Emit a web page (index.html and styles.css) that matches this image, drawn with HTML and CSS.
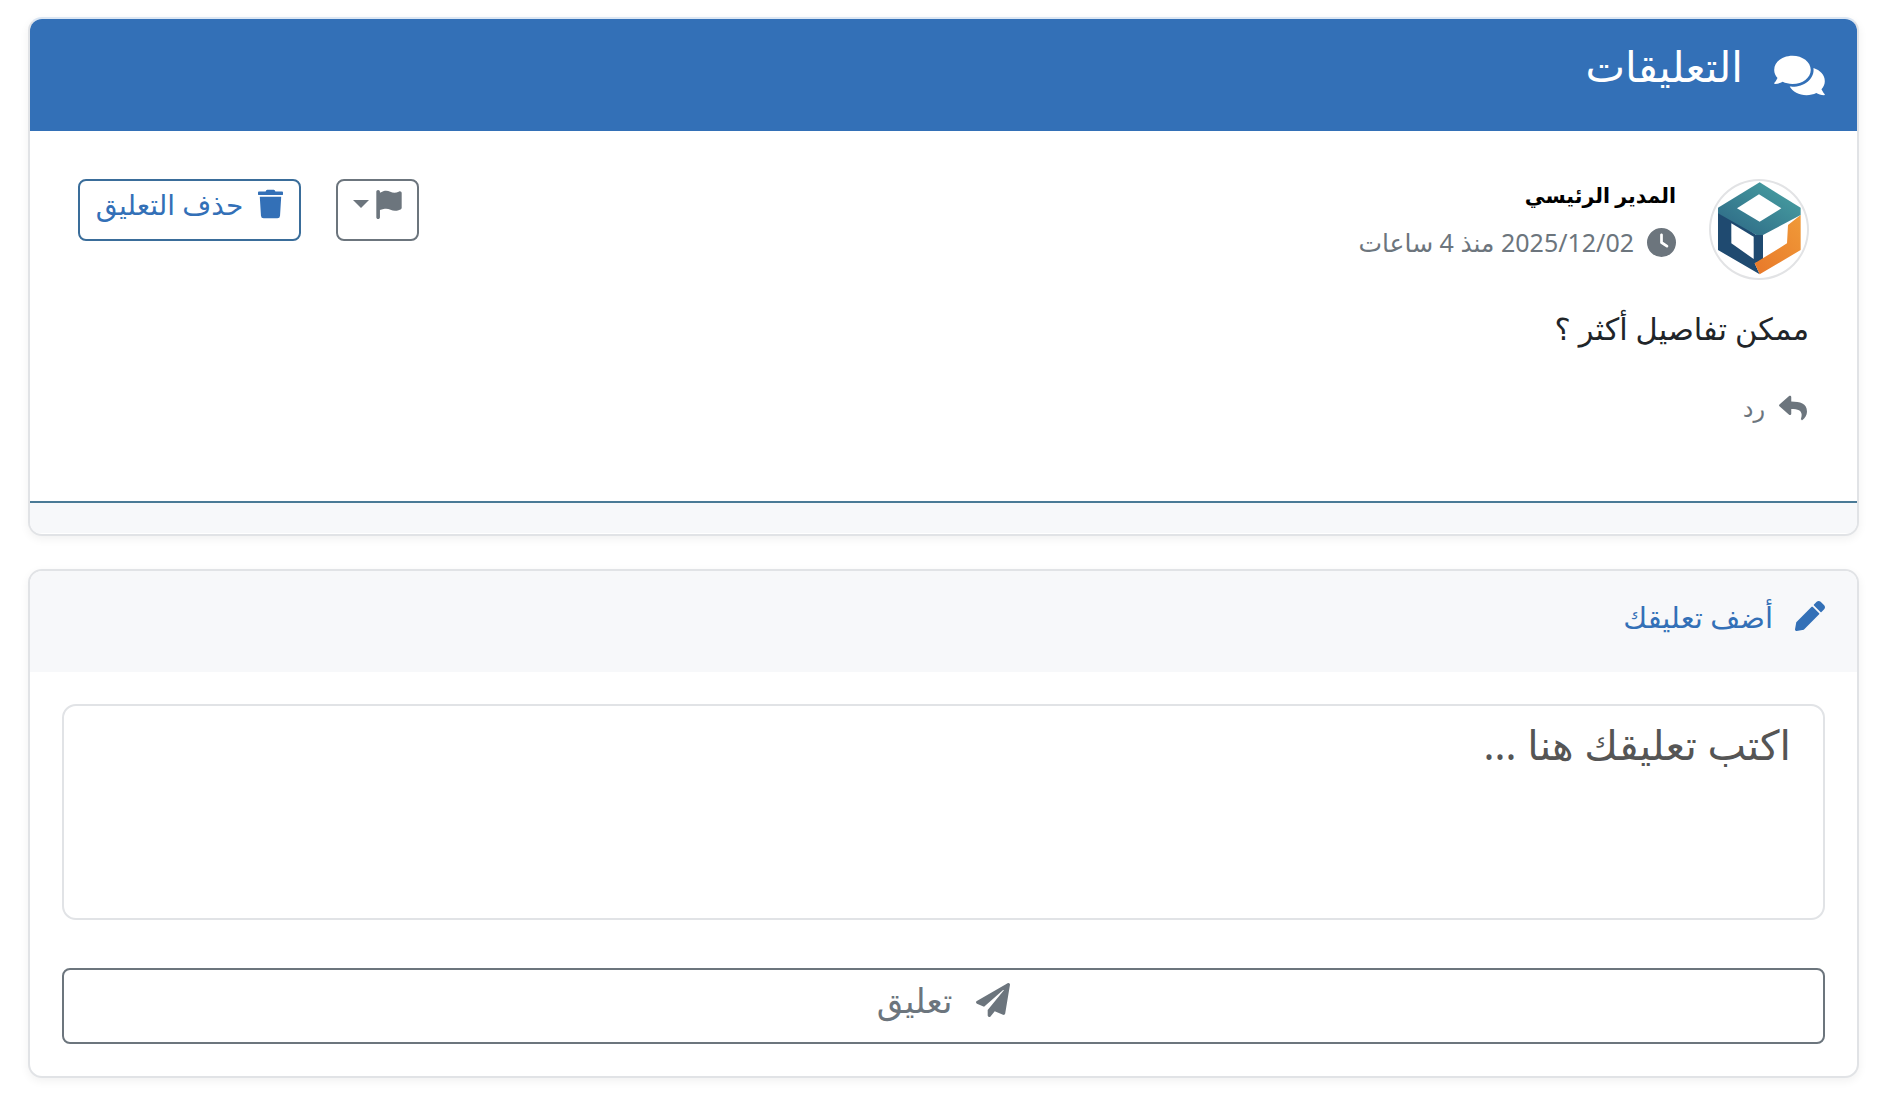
FILE: index.html
```html
<!DOCTYPE html>
<html lang="ar" dir="rtl">
<head>
    <meta charset="utf-8">
    <title>التعليقات</title>
    <link rel="stylesheet" href="styles.css">
</head>
<body>
    <section class="card comments-card">
        <header class="comments-head">
            <svg class="icon icon-comments" viewBox="0 0 576 512"><path d="M416 192c0-88.4-93.1-160-208-160S0 103.6 0 192c0 34.3 14.1 65.9 38 92-13.4 30.2-35.5 54.2-35.8 54.5-2.2 2.3-2.8 5.7-1.5 8.7S4.8 352 8 352c36.6 0 66.9-12.3 88.7-25 32.2 15.7 70.3 25 111.3 25 114.9 0 208-71.6 208-160zm122 220c23.9-26 38-57.7 38-92 0-66.9-53.5-124.2-129.3-148.1.9 6.6 1.3 13.3 1.3 20.1 0 105.9-107.7 192-240 192-10.8 0-21.3-.8-31.7-1.9C207.8 439.6 281.8 480 368 480c41 0 79.1-9.2 111.3-25 21.8 12.7 52.1 25 88.7 25 3.2 0 6.1-1.9 7.3-4.8 1.3-2.9.7-6.3-1.5-8.7-.3-.3-22.4-24.2-35.8-54.5z"/></svg>
            <h2 class="comments-title">التعليقات</h2>
        </header>

        <div class="comment">
            <div class="comment-top">
                <div class="comment-author">
                    <span class="avatar">
                        <svg viewBox="34 28 288 291" preserveAspectRatio="none">
                            <defs>
                                <linearGradient id="logoTop" x1="0" y1="1" x2="1" y2="0">
                                    <stop offset="0" stop-color="#2c6584"/>
                                    <stop offset="1" stop-color="#4aa5a4"/>
                                </linearGradient>
                                <linearGradient id="logoSide" x1="1" y1="0" x2="0" y2="1">
                                    <stop offset="0" stop-color="#f09a38"/>
                                    <stop offset="1" stop-color="#e8782a"/>
                                </linearGradient>
                            </defs>
                            <polygon fill="#1f4a70" points="55,112 170,190 190,190 190,265 165,275 180,308 55,235"/>
                            <polygon fill="#ffffff" points="95,155 162,195 162,262 95,215"/>
                            <polygon fill="url(#logoSide)" points="303,130 303,235 180,308 165,275 262,215 265,160"/>
                            <polygon fill="url(#logoTop)" points="180,32 303,108 303,130 190,190 170,190 55,125 55,108"/>
                            <polygon fill="#ffffff" points="178,68 245,110 180,150 112,110"/>
                        </svg>
                    </span>
                    <div class="author-info">
                        <strong class="author-name">المدير الرئيسي</strong>
                        <span class="comment-date">
                            <svg class="icon icon-clock" viewBox="0 0 512 512"><path d="M256 0a256 256 0 1 1 0 512A256 256 0 1 1 256 0zM232 120V256c0 8 4 15.5 10.7 20l96 64c11 7.4 25.9 4.4 33.3-6.7s4.4-25.9-6.7-33.3L280 243.2V120c0-13.3-10.7-24-24-24s-24 10.7-24 24z"/></svg>
                            <span>2025/12/02 منذ 4 ساعات</span>
                        </span>
                    </div>
                </div>
                <div class="comment-actions">
                    <button class="btn btn-flag">
                        <svg class="icon icon-flag" viewBox="0 0 448 512"><path d="M64 32C64 14.3 49.7 0 32 0S0 14.3 0 32V64 368 480c0 17.7 14.3 32 32 32s32-14.3 32-32V352l64.3-16.1c41.1-10.3 84.6-5.5 122.5 13.4c44.2 22.1 95.5 24.8 141.7 7.4l34.7-13c12.5-4.7 20.8-16.6 20.8-29.9V54.7c0-23-24.2-38-44.8-27.7l-9.6 4.8c-46.3 23.2-100.8 23.2-147.1 0c-35.1-17.6-75.4-22-113.5-12.5L64 48V32z"/></svg>
                        <span class="caret"></span>
                    </button>
                    <button class="btn btn-delete">
                        <svg class="icon icon-trash" viewBox="0 0 448 512"><path d="M432 32H312l-9.4-18.7A24 24 0 0 0 281.1 0H166.8a23.72 23.72 0 0 0-21.4 13.3L136 32H16A16 16 0 0 0 0 48v32a16 16 0 0 0 16 16h416a16 16 0 0 0 16-16V48a16 16 0 0 0-16-16zM53.2 467a48 48 0 0 0 47.9 45h245.8a48 48 0 0 0 47.9-45L416 128H32z"/></svg>
                        <span>حذف التعليق</span>
                    </button>
                </div>
            </div>
            <p class="comment-text">ممكن تفاصيل أكثر ؟</p>
            <a class="reply-link" href="#">
                <svg class="icon icon-reply" viewBox="0 0 512 512"><path d="M8.309 189.836L184.313 37.851C199.719 24.546 224 35.347 224 56.015v80.053c160.629 1.839 288 34.032 288 186.258 0 61.441-39.581 122.309-83.333 154.132-13.653 9.931-33.111-2.533-28.077-18.631 45.344-145.012-21.507-183.51-176.59-185.742V360c0 20.7-24.3 31.453-39.687 18.164l-176.004-152c-11.071-9.562-11.086-26.753 0-36.328z"/></svg>
                <span>رد</span>
            </a>
        </div>
        <div class="comments-foot"></div>
    </section>

    <section class="card add-card">
        <header class="add-head">
            <svg class="icon icon-pencil" viewBox="0 0 512 512"><path d="M497.9 142.1l-46.1 46.1c-4.7 4.7-12.3 4.7-17 0l-111-111c-4.7-4.7-4.7-12.3 0-17l46.1-46.1c18.7-18.7 49.1-18.7 67.9 0l60.1 60.1c18.8 18.7 18.8 49.1 0 67.9zM284.2 99.8L21.6 362.4.4 483.9c-2.9 16.4 11.4 30.6 27.8 27.8l121.5-21.3 262.6-262.6c4.7-4.7 4.7-12.3 0-17l-111-111c-4.8-4.7-12.4-4.7-17.1 0z"/></svg>
            <span class="add-title">أضف تعليقك</span>
        </header>
        <form class="add-form">
            <textarea class="add-input" placeholder="اكتب تعليقك هنا ..."></textarea>
            <button class="btn btn-send" type="button">
                <svg class="icon icon-send" viewBox="0 0 512 512"><path d="M476 3.2L12.5 270.6c-18.1 10.4-15.8 35.6 2.2 43.2L121 358.4l287.3-253.2c5.5-4.9 13.3 2.6 8.6 8.3L176 407v80.5c0 23.6 28.5 32.9 42.5 15.8L282 426l124.6 52.2c14.2 6 30.4-2.9 33-18.2l72-432C515 7.8 493.3-6.8 476 3.2z"/></svg>
                <span>تعليق</span>
            </button>
        </form>
    </section>
</body>
</html>
```

FILE: styles.css
```css
* {
    box-sizing: border-box;
}

body {
    margin: 0;
    padding: 17px 19px 35px 28px;
    background-color: #fff;
    color: #212529;
    font-family: "Noto Sans", "DejaVu Sans", sans-serif;
}

.icon {
    display: block;
    fill: currentColor;
    flex: none;
}

.card {
    background-color: #fff;
    border: 2px solid #e1e3e6;
    border-radius: 14px;
    box-shadow: 0 3px 10px rgba(0, 0, 0, 0.06);
    overflow: hidden;
}

.comments-card {
    height: 519px;
    border-top-color: #dbe6f3;
}

.comments-head {
    height: 112px;
    margin: 0 -2px;
    padding: 34px 34px 0 0;
    display: flex;
    align-items: flex-start;
    gap: 31px;
    background-color: #3370b7;
    color: #fff;
}

.icon-comments {
    width: 51px;
    height: 45px;
}

.comments-title {
    margin: -11px 0 0;
    font-size: 42px;
    font-weight: 400;
    line-height: 48px;
}

.comment {
    height: 372px;
    padding: 48px 48px 0;
    border-bottom: 2px solid #4a7a96;
}

.comment-top {
    display: flex;
    justify-content: space-between;
    align-items: flex-start;
}

.comment-author {
    display: flex;
    align-items: flex-start;
    gap: 33px;
}

.avatar {
    width: 100px;
    height: 101px;
    border: 2px solid #e2e3e5;
    border-radius: 50%;
    overflow: hidden;
}

.avatar svg {
    display: block;
    width: 100%;
    height: 100%;
}

.author-info {
    display: flex;
    flex-direction: column;
    gap: 13px;
}

.author-name {
    color: #000;
    font-size: 20.5px;
    line-height: 32px;
}

.comment-date {
    display: flex;
    align-items: center;
    gap: 13px;
    color: #6c757d;
    font-size: 25px;
    line-height: 36px;
}

.icon-clock {
    width: 29px;
    height: 29px;
}

.comment-actions {
    display: flex;
    gap: 35px;
}

.btn {
    display: flex;
    align-items: center;
    justify-content: center;
    background: #fff;
    border: 2px solid #6c757d;
    border-radius: 8px;
    color: #6c757d;
    font-family: inherit;
}

.btn-flag {
    width: 83px;
    height: 62px;
    padding: 0 0 12px;
    gap: 7px;
}

.icon-flag {
    width: 26px;
    height: 29px;
}

.caret {
    border-top: 8px solid #6c757d;
    border-left: 8px solid transparent;
    border-right: 8px solid transparent;
}

.btn-delete {
    width: 223px;
    height: 62px;
    padding: 0 0 12px;
    gap: 15px;
    border-color: #3a6d9a;
    color: #3370b7;
    font-size: 28px;
}

.icon-trash {
    width: 25px;
    height: 30px;
}

.comment-text {
    margin: 27px 0 0;
    font-size: 30.5px;
    line-height: 42px;
}

.reply-link {
    display: flex;
    align-items: center;
    gap: 14px;
    margin-top: 42px;
    padding-right: 2px;
    color: #6c757d;
    font-size: 24px;
    text-decoration: none;
}

.icon-reply {
    width: 28px;
    height: 28px;
}

.comments-foot {
    height: 30px;
    background-color: #f7f8fa;
}

.add-card {
    height: 509px;
    margin-top: 33px;
}

.add-head {
    height: 101px;
    padding: 30px 32px 0 0;
    display: flex;
    align-items: flex-start;
    gap: 22px;
    background-color: #f7f8fa;
    color: #3370b7;
    font-size: 29px;
}

.add-title {
    margin-top: -4px;
}

.icon-pencil {
    width: 30px;
    height: 30px;
}

.add-form {
    padding: 32px 32px 0;
    display: flex;
    flex-direction: column;
    gap: 48px;
}

.add-input {
    display: block;
    width: 100%;
    height: 216px;
    padding: 14px 32px;
    border: 2px solid #e1e3e6;
    border-radius: 14px;
    resize: none;
    font-family: inherit;
    font-size: 41px;
    line-height: 48px;
}

.add-input::placeholder {
    color: #555;
    opacity: 1;
}

.btn-send {
    height: 76px;
    width: 100%;
    padding: 0 0 13px;
    gap: 24px;
    font-size: 34px;
}

.icon-send {
    width: 34px;
    height: 34px;
}
```
